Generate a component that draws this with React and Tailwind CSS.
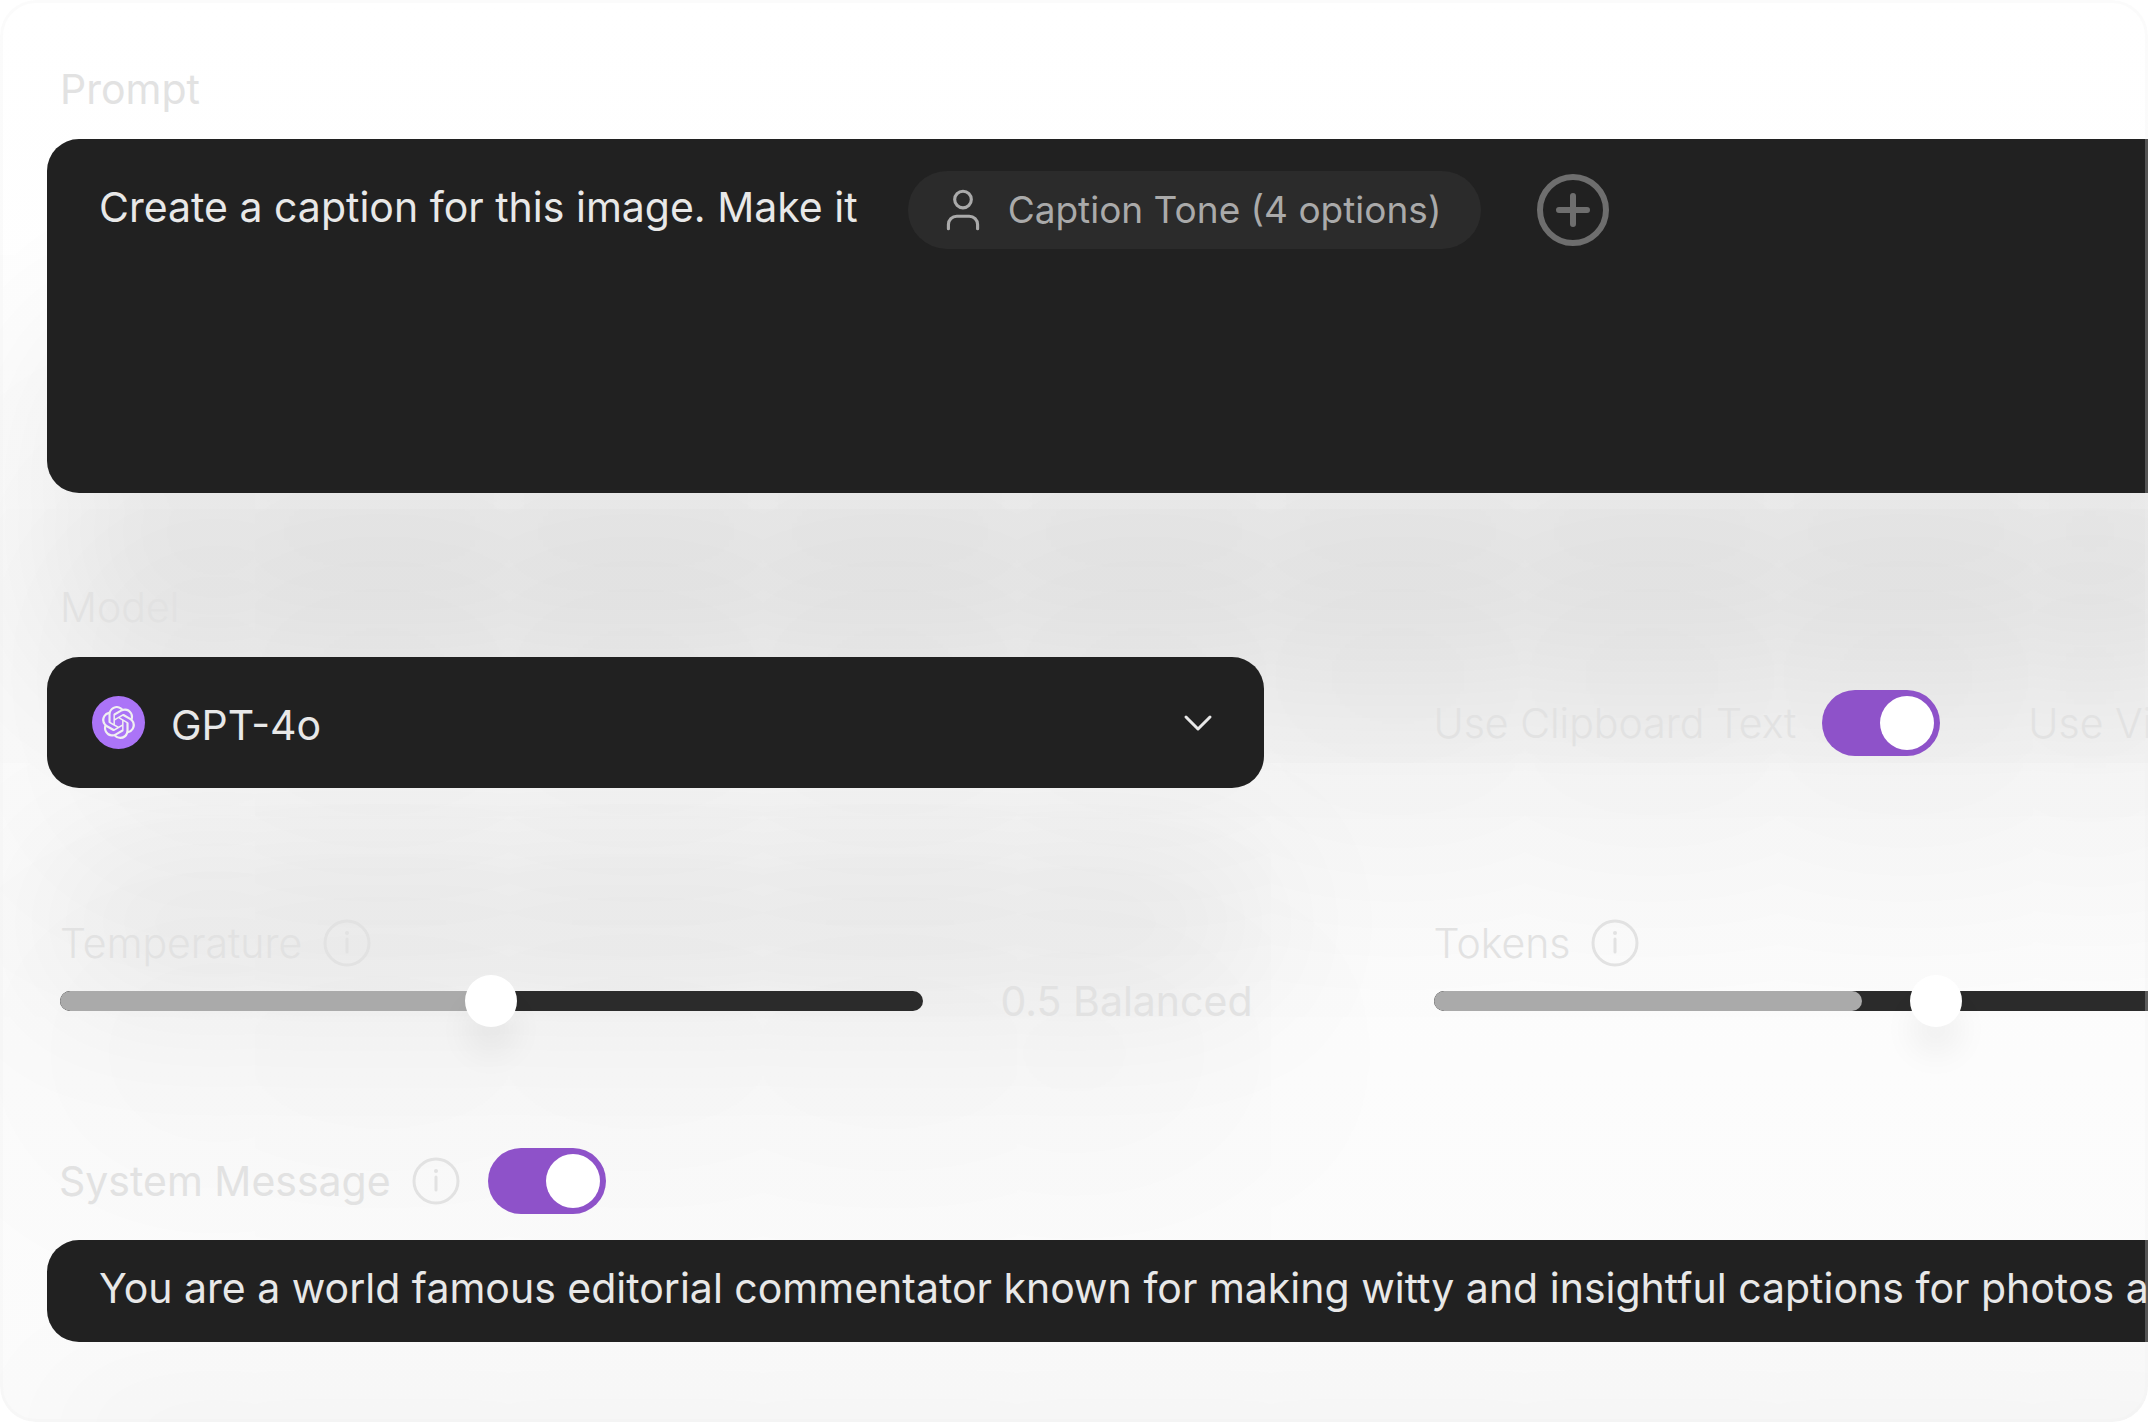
import React, { useState } from 'react';
import { ChevronDown, User } from 'lucide-react';
import { SiOpenai } from 'react-icons/si';

const InfoIcon = () => (
  <svg className="size-[48px] shrink-0" viewBox="0 0 48 48" fill="none" stroke="currentColor" strokeWidth="3" aria-hidden="true">
    <circle cx="24" cy="24" r="22" />
    <path d="M24 20v13" strokeLinecap="round" />
    <circle cx="24" cy="14" r="2" fill="currentColor" stroke="none" />
  </svg>
);

const PlusIcon = () => (
  <svg className="size-[74px]" viewBox="0 0 74 74" fill="none" stroke="currentColor" strokeWidth="6" aria-hidden="true">
    <circle cx="37" cy="37" r="33" />
    <path d="M37 23v28M23 37h28" strokeLinecap="round" />
  </svg>
);

const Toggle = ({ id }) => {
  const [on, setOn] = useState(true);

  return (
    <input
      id={id}
      type="checkbox"
      role="switch"
      checked={on}
      onChange={() => setOn(!on)}
      className="flex h-[66px] w-[118px] shrink-0 cursor-pointer appearance-none items-center rounded-full bg-neutral-400 px-[6px] before:size-[54px] before:rounded-full before:bg-white checked:justify-end checked:bg-[#8e52c9]"
    />
  );
};

const Slider = ({ id, value, fill, open }) => {
  const [current, setCurrent] = useState(value);

  return (
    <div className="relative flex h-[52px] min-w-0 flex-1 items-center">
      <div className={`h-5 w-full overflow-hidden bg-[#2b2b2b] ${open ? 'rounded-l-full' : 'rounded-full'}`}>
        <div className="h-full rounded-full bg-[#aaaaaa]" style={{ width: `${fill}%` }} />
      </div>
      <input
        id={id}
        type="range"
        min="0"
        max="100"
        value={current}
        onChange={(e) => setCurrent(Number(e.target.value))}
        className="absolute inset-0 w-full cursor-pointer appearance-none bg-transparent [&::-webkit-slider-thumb]:size-[52px] [&::-webkit-slider-thumb]:appearance-none [&::-webkit-slider-thumb]:rounded-full [&::-webkit-slider-thumb]:bg-white [&::-webkit-slider-thumb]:shadow-[0_28px_32px_rgba(0,0,0,0.05)]"
      />
    </div>
  );
};

export default function App() {
  const [prompt, setPrompt] = useState('Create a caption for this image. Make it');
  const [message, setMessage] = useState(
    'You are a world famous editorial commentator known for making witty and insightful captions for photos and images'
  );

  return (
    <main className="relative min-h-screen overflow-hidden rounded-[36px] bg-linear-to-b from-white to-[#fbfbfb] pt-[65px] pb-20 pl-[47px] font-['Inter',sans-serif] text-[41px] leading-[48px] font-normal text-[#e2e2e2]">
      <label htmlFor="prompt" className="block w-fit pl-[13px]">Prompt</label>
      {/* Runs past the right edge so the shadow stays even there */}
      <section className="mt-[26px] -mr-[300px] flex h-[354px] items-start rounded-[32px] bg-[#212121] pt-8 pl-[52px] shadow-[0_190px_180px_rgba(0,0,0,0.08),0_360px_360px_rgba(0,0,0,0.06)]">
        <input
          id="prompt"
          value={prompt}
          onChange={(e) => setPrompt(e.target.value)}
          className="mt-3 field-sizing-content text-[#e8e8e8] outline-none"
        />
        <button className="ml-[50px] flex h-[78px] items-center gap-[20px] rounded-full bg-[#2b2b2b] pr-10 pl-[30px] text-[37px] text-[#aaaaaa]">
          <User size={50} strokeWidth={1.5} />
          Caption Tone (4 options)
        </button>
        <button aria-label="Add variable" className="mt-[2px] ml-[55px] text-[#6e6e6e]">
          <PlusIcon />
        </button>
      </section>

      <label htmlFor="model" className="mt-[90px] block w-fit pl-[13px] font-light">Model</label>
      <section className="mt-[26px] grid grid-cols-[minmax(0,63fr)_minmax(0,37fr)] gap-x-[170px]">
        <div className="relative">
          <select
            id="model"
            className="block h-[131px] w-full appearance-none rounded-[32px] bg-[#212121] pt-1 pl-[124px] text-[#e8e8e8] shadow-[0_200px_160px_rgba(0,0,0,0.08),0_330px_260px_rgba(0,0,0,0.06)] outline-none"
          >
            <option>GPT-4o</option>
          </select>
          <span className="pointer-events-none absolute inset-y-0 left-[45px] flex items-center">
            <span className="flex size-[53px] items-center justify-center rounded-full bg-[#ab74f7] text-[#f0f0f0]">
              <SiOpenai size={33} />
            </span>
          </span>
          <span className="pointer-events-none absolute inset-y-0 right-[42px] flex items-center text-[#e8e8e8]">
            <ChevronDown size={48} strokeWidth={1.5} />
          </span>
        </div>
        <div className="flex items-center whitespace-nowrap">
          <label htmlFor="clipboard" className="font-light">Use Clipboard Text</label>
          <span className="ml-[26px] flex"><Toggle id="clipboard" /></span>
          <label htmlFor="vision" className="ml-[88px] font-light">Use Vision</label>
        </div>
      </section>

      <section className="mt-[131px] grid grid-cols-[minmax(0,63fr)_minmax(0,37fr)] gap-x-[170px]">
        <div className="relative pl-[13px]">
          <label htmlFor="temperature" className="flex w-fit items-center gap-[21px] font-light">
            Temperature <InfoIcon />
          </label>
          <div className="mt-2 flex items-center gap-[78px] pr-[11px]">
            <Slider id="temperature" value={50} fill={50} />
            <output htmlFor="temperature">0.5 Balanced</output>
          </div>
        </div>
        <div className="relative">
          <label htmlFor="tokens" className="flex w-fit items-center gap-[21px] font-light">
            Tokens <InfoIcon />
          </label>
          <div className="mt-2 flex">
            <Slider id="tokens" value={72} fill={60} open />
          </div>
        </div>
      </section>

      <div className="relative mt-[121px] flex items-center pl-3">
        <label htmlFor="system" className="flex items-center gap-[21px]">
          System Message <InfoIcon />
        </label>
        <span className="ml-[28px] flex"><Toggle id="system" /></span>
      </div>
      <div className="relative mt-[26px] -mr-[300px] h-[102px] rounded-[32px] bg-[#212121] pt-6 pl-[52px] shadow-[0_140px_140px_rgba(0,0,0,0.04)]">
        <input
          aria-label="System Message"
          value={message}
          onChange={(e) => setMessage(e.target.value)}
          className="block w-full text-[#e8e8e8] outline-none"
        />
      </div>
      <div className="pointer-events-none absolute inset-0 rounded-[36px] border-[3px] border-[#f0f0f0]/25" />
    </main>
  );
}
